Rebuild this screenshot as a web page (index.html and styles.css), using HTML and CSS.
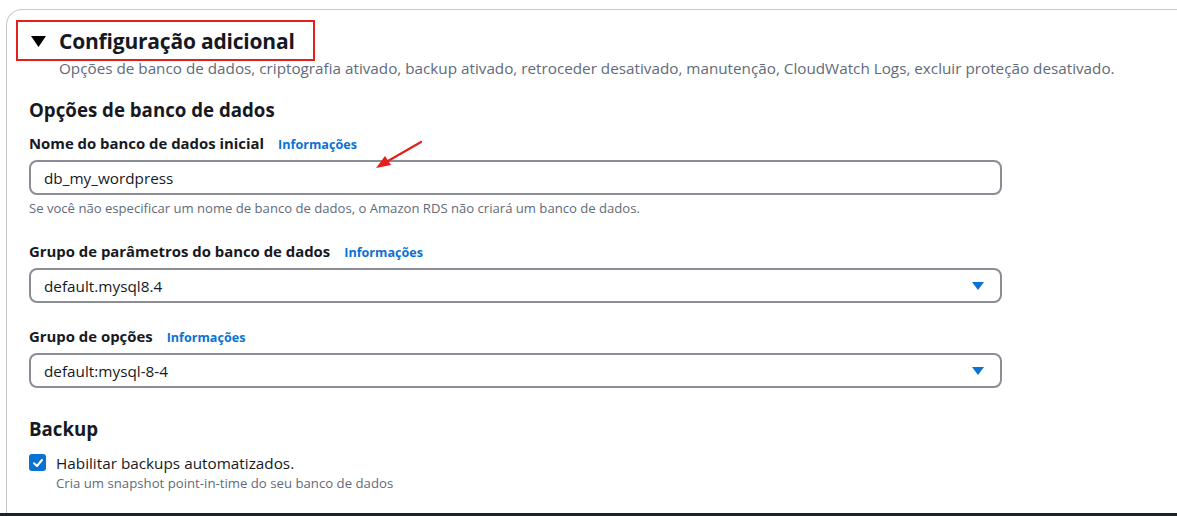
FILE: index.html
```html
<!DOCTYPE html>
<html lang="pt-BR">
<head>
<meta charset="utf-8">
<title>Configuração adicional</title>
<link rel="stylesheet" href="styles.css">
</head>
<body>
<div class="page">
  <section class="card">
    <header class="expander">
      <div class="expander-title">
        <svg class="caret" width="15" height="11" viewBox="0 0 15 11"><polygon points="0,0 15,0 7.5,11" fill="#000"/></svg>
        <h2>Configuração adicional</h2>
      </div>
      <p class="expander-desc">Opções de banco de dados, criptografia ativado, backup ativado, retroceder desativado, manutenção, CloudWatch Logs, excluir proteção desativado.</p>
    </header>

    <div class="content">
      <h3 class="section-title">Opções de banco de dados</h3>

      <div class="field field-first">
        <div class="label-row"><span class="label">Nome do banco de dados inicial</span><a class="info">Informações</a></div>
        <div class="input">db_my_wordpress</div>
        <div class="hint">Se você não especificar um nome de banco de dados, o Amazon RDS não criará um banco de dados.</div>
      </div>

      <div class="field field-gap1">
        <div class="label-row"><span class="label">Grupo de parâmetros do banco de dados</span><a class="info">Informações</a></div>
        <div class="input select"><span>default.mysql8.4</span><svg class="sel-caret" width="12" height="8" viewBox="0 0 12 8"><polygon points="0,0 12,0 6,8" fill="#0972d3"/></svg></div>
      </div>

      <div class="field field-gap2">
        <div class="label-row"><span class="label">Grupo de opções</span><a class="info">Informações</a></div>
        <div class="input select"><span>default:mysql-8-4</span><svg class="sel-caret" width="12" height="8" viewBox="0 0 12 8"><polygon points="0,0 12,0 6,8" fill="#0972d3"/></svg></div>
      </div>

      <h3 class="section-title backup-title">Backup</h3>
      <div class="check-row">
        <span class="checkbox"><svg width="16" height="16" viewBox="0 0 16 16"><polyline points="4,8.2 7,11 12,5" fill="none" stroke="#fff" stroke-width="2" stroke-linecap="round" stroke-linejoin="round"/></svg></span>
        <div class="check-text">
          <div class="check-label">Habilitar backups automatizados.</div>
          <div class="check-desc">Cria um snapshot point-in-time do seu banco de dados</div>
        </div>
      </div>
    </div>
  </section>
  <div class="bottom-bar"></div>

  <div class="highlight"></div>
  <svg class="arrow" width="60" height="40" viewBox="0 0 60 40">
    <line x1="55" y1="3" x2="22" y2="22" stroke="#e3201b" stroke-width="2.2" stroke-linecap="round"/>
    <polygon points="10,29 19,17 25,26" fill="#e3201b"/>
  </svg>
</div>
</body>
</html>
```

FILE: styles.css
```css
* { box-sizing: border-box; }
html, body { margin: 0; padding: 0; background: #fff; }
body {
  font-family: "Open Sans", "Noto Sans", Arial, sans-serif;
  color: #16191f;
  overflow: hidden;
  width: 1177px;
  height: 516px;
}
.page { position: relative; width: 1177px; height: 516px; padding-top: 9px; }

.card {
  margin-left: 6px;
  height: 504px;
  border: 1px solid #c6c6cd;
  border-right: none;
  border-bottom: none;
  border-radius: 16px 0 0 0;
  padding: 17px 0 0 0;
}

.expander-title {
  display: flex;
  align-items: center;
  height: 28px;
  padding-left: 24px;
}
.caret { margin-top: 1px; }
.expander-title h2 {
  margin: 0 0 0 13px;
  font-size: 21px;
  font-weight: 700;
  line-height: 28px;
  letter-spacing: -0.2px;
}
.expander-desc {
  margin: 3px 0 0 52px;
  font-size: 15.25px;
  line-height: 20px;
  color: #5f6b7a;
  white-space: nowrap;
}

.content { padding-left: 22px; width: 995px; }

.section-title {
  margin: 21px 0 0 0;
  font-size: 18.7px;
  font-weight: 700;
  line-height: 22px;
  height: 22px;
}

.label-row { display: flex; align-items: baseline; line-height: 20px; height: 20px; }
.label { font-size: 14.9px; font-weight: 700; }
.info { margin-left: 14px; font-size: 12.6px; font-weight: 700; color: #0972d3; }

.field-first { margin-top: 12px; }
.field-gap1 { margin-top: 25px; }
.field-gap2 { margin-top: 23px; }

.input {
  margin-top: 7px;
  height: 35px;
  border: 2px solid #8c8c94;
  border-radius: 8px;
  padding: 0 13px;
  display: flex;
  align-items: center;
  font-size: 15.3px;
}
.select { justify-content: space-between; padding-right: 16px; }
.sel-caret { margin-top: 1px; }

.hint {
  margin-top: 5px;
  font-size: 13.1px;
  line-height: 16px;
  color: #5f6b7a;
  white-space: nowrap;
}

.backup-title { margin-top: 30px; }

.check-row { display: flex; margin-top: 13px; }
.checkbox {
  width: 17px; height: 17px;
  margin-top: 1px;
  background: #0972d3;
  border-radius: 3px;
  display: flex; align-items: center; justify-content: center;
}
.check-text { margin-left: 10px; }
.check-label { font-size: 15.3px; line-height: 20px; }
.check-desc { margin-top: 2px; font-size: 13.2px; line-height: 16px; color: #5f6b7a; }

.bottom-bar { height: 3px; background: #1e2126; }

.highlight {
  position: absolute;
  left: 16px; top: 20px;
  width: 299px; height: 41px;
  border: 2px solid #e3201b;
}
.arrow { position: absolute; left: 366px; top: 139px; }
```
